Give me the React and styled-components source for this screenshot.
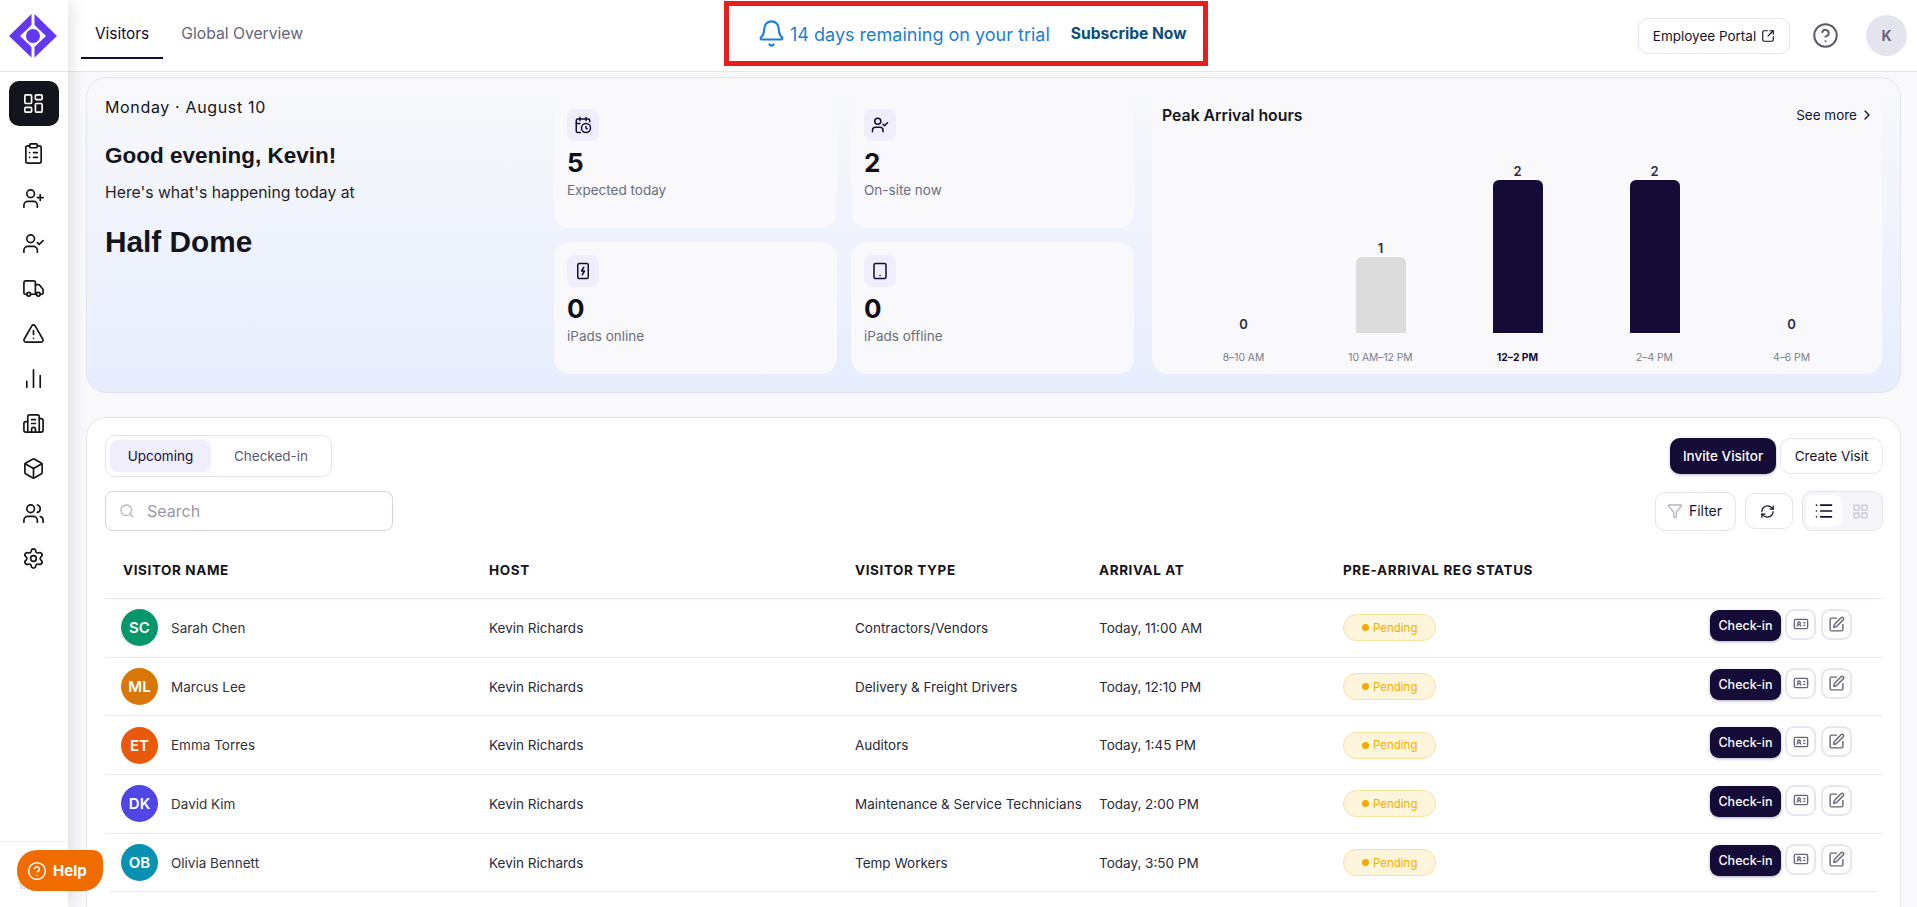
import styled, { createGlobalStyle } from "styled-components";
import {
  LayoutDashboard,
  ClipboardList,
  UserPlus,
  UserCheck,
  Truck,
  TriangleAlert,
  ChartNoAxesColumn,
  Building2,
  Box,
  Users,
  Settings,
  Bell,
  CircleHelp,
  SquareArrowOutUpRight,
  CalendarClock,
  Tablet,
  ChevronRight,
  Search,
  Filter,
  RefreshCw,
  List,
  LayoutGrid,
  IdCard,
  SquarePen,
} from "lucide-react";

const GlobalStyle = createGlobalStyle`
  * {
    box-sizing: border-box;
  }
  html, body {
    margin: 0;
    height: 100%;
    overflow: hidden;
    background: #f9f9fb;
    font-family: Inter, "Liberation Sans", sans-serif;
    color: #14141c;
  }
`;

const Page = styled.div`
  display: flex;
  height: 100vh;
  overflow: hidden;
  position: relative;
`;

const Sidebar = styled.aside`
  width: 68px;
  flex-shrink: 0;
  background: #fff;
  display: flex;
  flex-direction: column;
  box-shadow: 0 0 18px rgba(20, 20, 40, 0.16);
  z-index: 2;
`;

const LogoBox = styled.div`
  height: 72px;
  flex-shrink: 0;
  border-bottom: 1px solid #e4e4ef;
  display: flex;
  align-items: center;
  justify-content: center;
  padding-right: 2px;
`;

const SideNav = styled.nav`
  display: flex;
  flex-direction: column;
  padding: 9px 9px 0;
`;

const SideItem = styled.div`
  height: 45px;
  width: 50px;
  padding-right: 2px;
  border-radius: 10px;
  display: flex;
  align-items: center;
  justify-content: center;
  background: ${(p) => (p.$active ? "#14141c" : "transparent")};
  color: ${(p) => (p.$active ? "#fff" : "#14141c")};
  margin-bottom: ${(p) => (p.$active ? "5px" : "0")};
`;

const SideFooter = styled.div`
  margin-top: auto;
  height: 66px;
  border-top: 1px solid #f0f0f5;
  padding: 36px 0 0 18px;
  font-size: 11px;
  color: #c4c4d0;
`;

const HelpButton = styled.button`
  position: absolute;
  left: 17px;
  top: 850px;
  width: 86px;
  height: 41px;
  border: none;
  border-radius: 20px 10px 20px 20px;
  background: #ee6c00;
  color: #fff;
  font-family: inherit;
  font-size: 15px;
  font-weight: 700;
  display: flex;
  align-items: center;
  gap: 6px;
  padding: 0 0 0 10px;
  z-index: 3;
`;

const Main = styled.main`
  flex: 1;
  min-width: 0;
  display: flex;
  flex-direction: column;
`;

const Header = styled.header`
  height: 72px;
  flex-shrink: 0;
  background: #fff;
  border-bottom: 1px solid #e4e4ef;
  display: flex;
  align-items: center;
  padding: 0 10px 0 13px;
`;

const TopTabs = styled.div`
  width: 222px;
  display: flex;
  align-self: stretch;
  gap: 18px;
`;

const TopTab = styled.div`
  height: 59px;
  padding: 10px ${(p) => (p.$active ? "14px" : "0")} 0;
  display: flex;
  align-items: center;
  font-size: ${(p) => (p.$active ? "15.4px" : "15.7px")};
  white-space: nowrap;
  color: ${(p) => (p.$active ? "#140b36" : "#64647c")};
  border-bottom: 2px solid ${(p) => (p.$active ? "#140b36" : "transparent")};
`;

const TrialBanner = styled.div`
  width: 484px;
  height: 65px;
  margin: 1px 0 6px 421px;
  border: 5px solid #e81e1e;
  display: flex;
  align-items: center;
  padding-left: 28px;
`;

const TrialText = styled.span`
  margin: 3px 0 0 4px;
  font-size: 18px;
  color: #1a7fd4;
`;

const SubscribeLink = styled.span`
  margin: 1px 0 0 21px;
  font-size: 15.6px;
  font-weight: 700;
  color: #0a4d80;
`;

const HeaderRight = styled.div`
  margin-left: auto;
  display: flex;
  align-items: center;
`;

const PortalButton = styled.button`
  width: 152px;
  height: 36px;
  border: 1px solid #e4e4ef;
  border-radius: 10px;
  background: #fff;
  font-family: inherit;
  font-size: 13.5px;
  color: #14142c;
  display: flex;
  align-items: center;
  justify-content: center;
  gap: 5px;
`;

const HelpIcon = styled.div`
  margin: 0 27px 0 22px;
  display: flex;
  color: #5c5c6e;
`;

const UserBadge = styled.div`
  width: 41px;
  height: 41px;
  border-radius: 50%;
  background: #e4e4ef;
  color: #66667a;
  font-size: 14px;
  font-weight: 700;
  display: flex;
  align-items: center;
  justify-content: center;
`;

const Content = styled.div`
  flex: 1;
  min-height: 0;
  padding: 5px 16px 0 18px;
  display: flex;
  flex-direction: column;
  gap: 24px;
`;

const Hero = styled.section`
  height: 316px;
  flex-shrink: 0;
  border: 1px solid #e4e4ef;
  border-radius: 20px;
  background: linear-gradient(180deg, #f9f9fb 0%, #e6edfd 100%);
  padding: 18px;
  display: grid;
  grid-template-columns: 1fr 580px 730px;
  gap: 18px;
`;

const Welcome = styled.div`
  display: flex;
  flex-direction: column;
`;

const DateLine = styled.div`
  margin-top: 1px;
  font-size: 16px;
  letter-spacing: 0.65px;
  line-height: 20px;
`;

const Greeting = styled.h1`
  margin: 23px 0 0;
  font-family: "Liberation Sans", sans-serif;
  font-size: 22.5px;
  line-height: 32px;
  font-weight: 700;
`;

const Happening = styled.div`
  margin-top: 11px;
  font-size: 15.75px;
  line-height: 20px;
  color: #1e1e2c;
`;

const SiteName = styled.div`
  margin-top: 21px;
  font-family: "Liberation Sans", sans-serif;
  font-size: 29.8px;
  line-height: 36px;
  font-weight: 700;
`;

const StatGrid = styled.div`
  display: grid;
  grid-template-columns: 283px 283px;
  grid-template-rows: 132px 132px;
  gap: 14px;
`;

const StatCard = styled.div`
  background: #f9f9fb;
  border-radius: 16px;
  padding: 13px;
`;

const StatIcon = styled.div`
  width: 32px;
  height: 32px;
  border-radius: 8px;
  background: #f0edfd;
  color: #140b36;
  display: flex;
  align-items: center;
  justify-content: center;
`;

const StatValue = styled.div`
  margin-top: 7px;
  font-size: 26px;
  line-height: 30px;
  font-weight: 700;
  color: #101018;
`;

const StatLabel = styled.div`
  margin-top: 2px;
  font-size: 13.5px;
  line-height: 20px;
  color: #6c6c80;
`;

const ChartCard = styled.div`
  background: #f9f9fb;
  border-radius: 16px;
  padding: 9px 7px 0 10px;
  display: flex;
  flex-direction: column;
`;

const ChartHead = styled.div`
  display: flex;
  align-items: center;
  justify-content: space-between;
  height: 20px;
`;

const ChartTitle = styled.div`
  font-size: 15.8px;
  font-weight: 600;
`;

const SeeMore = styled.div`
  display: flex;
  align-items: center;
  gap: 2px;
  font-size: 13.5px;
  color: #14142c;
`;

const ChartColumns = styled.div`
  flex: 1;
  display: flex;
  align-items: flex-end;
  padding: 0 15px 9px 13px;
`;

const ChartColumn = styled.div`
  flex: 1;
  display: flex;
  flex-direction: column;
  align-items: center;
`;

const BarValue = styled.div`
  font-size: 13px;
  font-weight: 600;
  line-height: 16px;
  margin-bottom: 1px;
  color: #2c2c44;
`;

const Bar = styled.div`
  width: 50px;
  height: ${(p) => p.$height}px;
  border-radius: 6px 6px 0 0;
  background: ${(p) => (p.$dark ? "#140b36" : "#dcdcdc")};
`;

const BarLabel = styled.div`
  margin-top: 16px;
  font-size: 10.3px;
  line-height: 16px;
  font-weight: ${(p) => (p.$bold ? 700 : 400)};
  color: ${(p) => (p.$bold ? "#140b36" : "#7c7c8c")};
`;

const VisitorsCard = styled.section`
  flex: 1;
  min-height: 540px;
  border: 1px solid #e4e4ef;
  border-radius: 20px;
  background: #fff;
  padding: 17px 17px 0 18px;
`;

const ToolRow = styled.div`
  display: flex;
  align-items: center;
  justify-content: space-between;
  margin-bottom: 14px;
`;

const ToolGroup = styled.div`
  display: flex;
  align-items: center;
  gap: ${(p) => p.$gap || 0}px;
`;

const SegTabs = styled.div`
  width: 227px;
  height: 42px;
  border: 1px solid #e4e4ef;
  border-radius: 10px;
  padding: 4px;
  display: flex;
`;

const SegTab = styled.div`
  width: ${(p) => (p.$active ? "101px" : "auto")};
  flex: ${(p) => (p.$active ? "none" : 1)};
  padding-left: ${(p) => (p.$active ? "0" : "4px")};
  border-radius: 8px;
  background: ${(p) => (p.$active ? "#f0edfd" : "transparent")};
  color: ${(p) => (p.$active ? "#140b36" : "#5c5c74")};
  font-size: 13.5px;
  display: flex;
  align-items: center;
  justify-content: center;
`;

const PrimaryButton = styled.button`
  width: 106px;
  height: 36px;
  border: none;
  border-radius: 10px;
  background: #140b36;
  color: #fff;
  font-family: inherit;
  font-size: 13.5px;
  font-weight: 500;
  box-shadow: 0 1px 3px rgba(20, 11, 54, 0.3);
`;

const OutlineButton = styled.button`
  width: 103px;
  height: 36px;
  border: 1px solid #e4e4ef;
  border-radius: 10px;
  background: #fff;
  color: #14142c;
  font-family: inherit;
  font-size: 13.5px;
`;

const SearchBox = styled.div`
  width: 288px;
  height: 40px;
  border: 1px solid #d2d2e2;
  border-radius: 8px;
  display: flex;
  align-items: center;
  gap: 12px;
  padding-left: 13px;
  color: #9898a8;
  font-size: 16px;
`;

const FilterButton = styled.button`
  width: 81px;
  height: 39px;
  border: 1px solid #e4e4ef;
  border-radius: 10px;
  background: #fff;
  color: #14142c;
  font-family: inherit;
  font-size: 14px;
  display: flex;
  align-items: center;
  justify-content: center;
  gap: 6px;
  padding: 0 2px 1px 0;
`;

const RefreshButton = styled.button`
  width: 48px;
  height: 36px;
  border: 1px solid #e4e4ef;
  border-radius: 10px;
  background: #fff;
  color: #14142c;
  display: flex;
  align-items: center;
  justify-content: center;
  padding: 0 4px 0 0;
`;

const ViewToggle = styled.div`
  width: 81px;
  height: 40px;
  border: 1px solid #e4e4ef;
  border-radius: 10px;
  background: #f6f6fa;
  padding: 3px;
  display: flex;
`;

const ViewOption = styled.div`
  width: 36px;
  margin-right: 1px;
  flex: ${(p) => (p.$active ? "none" : 1)};
  border-radius: 8px;
  background: ${(p) => (p.$active ? "#fff" : "transparent")};
  color: ${(p) => (p.$active ? "#140b36" : "#c8c8d6")};
  display: flex;
  align-items: center;
  justify-content: center;
`;

const columns = "366px 366px 244px 244px 1fr auto";

const TableHead = styled.div`
  display: grid;
  grid-template-columns: ${columns};
  align-items: center;
  height: 68px;
  margin-top: -14px;
  padding-top: 11px;
  border-bottom: 1px solid #e4e4ef;
`;

const HeadCell = styled.div`
  padding-left: 18px;
  font-size: 13.5px;
  font-weight: 700;
  letter-spacing: 0.6px;
  color: #14141c;
  white-space: nowrap;
`;

const Row = styled.div`
  display: grid;
  grid-template-columns: ${columns};
  align-items: center;
  height: 58.7px;
  border-bottom: 1px solid #e8e8f1;
  padding-right: 31px;
  &:last-of-type {
    border-bottom-color: transparent;
  }
`;

const TableEnd = styled.hr`
  margin: -1px 6px 0 5px;
  height: 1px;
  border: none;
  background: #e8e8f1;
`;

const Cell = styled.div`
  padding-left: 18px;
  font-size: 13.5px;
  color: #2a2a3c;
  white-space: nowrap;
  overflow: hidden;
`;

const NameCell = styled.div`
  padding-left: 16px;
  display: flex;
  align-items: center;
  gap: 13px;
  font-size: 13.5px;
  color: #33333c;
`;

const Avatar = styled.div`
  width: 37px;
  height: 37px;
  border-radius: 50%;
  background: ${(p) => p.$color};
  color: #fff;
  font-size: 15px;
  font-weight: 600;
  display: flex;
  align-items: center;
  justify-content: center;
`;

const PendingPill = styled.span`
  width: 93px;
  height: 27px;
  border: 1px solid #fbdf9c;
  border-radius: 14px;
  background: #fef5dd;
  color: #f5b000;
  font-size: 11.5px;
  display: inline-flex;
  align-items: center;
  gap: 4px;
  padding-left: 18px;
  &::before {
    content: "";
    width: 7px;
    height: 7px;
    border-radius: 50%;
    background: #f5ab00;
  }
`;

const Actions = styled.div`
  display: flex;
  align-items: center;
  gap: 4px;
  margin-bottom: 5px;
`;

const CheckInButton = styled.button`
  width: 71px;
  height: 31px;
  border: none;
  border-radius: 9px;
  background: #140b36;
  color: #fff;
  font-family: inherit;
  font-size: 12.5px;
  font-weight: 500;
  box-shadow: 0 1px 3px rgba(20, 11, 54, 0.35);
`;

const IconButton = styled.button`
  width: 31px;
  height: 31px;
  padding: 0;
  margin-bottom: 2px;
  border: 2px solid #e6e6f0;
  border-radius: 9px;
  background: #fff;
  color: #66667a;
  display: flex;
  align-items: center;
  justify-content: center;
  & + & {
    margin-left: 1px;
  }
`;

const Logo = () => (
  <svg width="48" height="44" viewBox="0 0 48 44" fill="#6438ee">
    <path d="M22.5 0 L0 22 L22.5 43.5 L22.5 33 L11 22 L22.5 11 Z" />
    <path d="M25.5 0 L48 22 L25.5 43.5 L25.5 33 L37 22 L25.5 11 Z" />
    <circle cx="24" cy="22" r="7" />
  </svg>
);

const ChargingTablet = () => (
  <svg width="18" height="18" viewBox="0 0 24 24" fill="none" stroke="currentColor" strokeWidth="2" strokeLinecap="round" strokeLinejoin="round">
    <rect x="5" y="2" width="14" height="20" rx="2" />
    <path d="M13 7l-3 5h4l-3 5" />
  </svg>
);

const navIcons = [
  ClipboardList,
  UserPlus,
  UserCheck,
  Truck,
  TriangleAlert,
  ChartNoAxesColumn,
  Building2,
  Box,
  Users,
  Settings,
];

const stats = [
  { icon: <CalendarClock size={18} />, value: 5, label: "Expected today" },
  { icon: <UserCheck size={18} />, value: 2, label: "On-site now" },
  { icon: <ChargingTablet />, value: 0, label: "iPads online" },
  { icon: <Tablet size={18} />, value: 0, label: "iPads offline" },
];

const bars = [
  { label: "8–10 AM", value: 0, height: 0 },
  { label: "10 AM–12 PM", value: 1, height: 76 },
  { label: "12–2 PM", value: 2, height: 153, dark: true, bold: true },
  { label: "2–4 PM", value: 2, height: 153, dark: true },
  { label: "4–6 PM", value: 0, height: 0 },
];

const visitors = [
  { initials: "SC", name: "Sarah Chen", color: "#059669", type: "Contractors/Vendors", time: "Today, 11:00 AM" },
  { initials: "ML", name: "Marcus Lee", color: "#d97706", type: "Delivery & Freight Drivers", time: "Today, 12:10 PM" },
  { initials: "ET", name: "Emma Torres", color: "#ea580c", type: "Auditors", time: "Today, 1:45 PM" },
  { initials: "DK", name: "David Kim", color: "#4f46e5", type: "Maintenance & Service Technicians", time: "Today, 2:00 PM" },
  { initials: "OB", name: "Olivia Bennett", color: "#0891b2", type: "Temp Workers", time: "Today, 3:50 PM" },
];

function App() {
  return (
    <>
      <GlobalStyle />
      <Page>
        <Sidebar>
          <LogoBox>
            <Logo />
          </LogoBox>
          <SideNav>
            <SideItem $active>
              <LayoutDashboard size={23} strokeWidth={1.75} />
            </SideItem>
            {navIcons.map((Icon, i) => (
              <SideItem key={i}>
                <Icon size={23} strokeWidth={1.75} />
              </SideItem>
            ))}
          </SideNav>
          <SideFooter>1.0</SideFooter>
        </Sidebar>

        <HelpButton>
          <CircleHelp size={20} strokeWidth={1.75} />
          Help
        </HelpButton>

        <Main>
          <Header>
            <TopTabs>
              <TopTab $active>Visitors</TopTab>
              <TopTab>Global Overview</TopTab>
            </TopTabs>
            <TrialBanner>
              <Bell size={29} color="#1a7fd4" strokeWidth={1.75} />
              <TrialText>14 days remaining on your trial</TrialText>
              <SubscribeLink>Subscribe Now</SubscribeLink>
            </TrialBanner>
            <HeaderRight>
              <PortalButton>
                Employee Portal
                <SquareArrowOutUpRight size={14} />
              </PortalButton>
              <HelpIcon>
                <CircleHelp size={27} strokeWidth={1.75} />
              </HelpIcon>
              <UserBadge>K</UserBadge>
            </HeaderRight>
          </Header>

          <Content>
            <Hero>
              <Welcome>
                <DateLine>Monday · August 10</DateLine>
                <Greeting>Good evening, Kevin!</Greeting>
                <Happening>Here's what's happening today at</Happening>
                <SiteName>Half Dome</SiteName>
              </Welcome>
              <StatGrid>
                {stats.map((s) => (
                  <StatCard key={s.label}>
                    <StatIcon>{s.icon}</StatIcon>
                    <StatValue>{s.value}</StatValue>
                    <StatLabel>{s.label}</StatLabel>
                  </StatCard>
                ))}
              </StatGrid>
              <ChartCard>
                <ChartHead>
                  <ChartTitle>Peak Arrival hours</ChartTitle>
                  <SeeMore>
                    See more <ChevronRight size={16} />
                  </SeeMore>
                </ChartHead>
                <ChartColumns>
                  {bars.map((b) => (
                    <ChartColumn key={b.label}>
                      <BarValue>{b.value}</BarValue>
                      <Bar $height={b.height} $dark={b.dark} />
                      <BarLabel $bold={b.bold}>{b.label}</BarLabel>
                    </ChartColumn>
                  ))}
                </ChartColumns>
              </ChartCard>
            </Hero>

            <VisitorsCard>
              <ToolRow>
                <SegTabs>
                  <SegTab $active>Upcoming</SegTab>
                  <SegTab>Checked-in</SegTab>
                </SegTabs>
                <ToolGroup $gap={4}>
                  <PrimaryButton>Invite Visitor</PrimaryButton>
                  <OutlineButton>Create Visit</OutlineButton>
                </ToolGroup>
              </ToolRow>
              <ToolRow>
                <SearchBox>
                  <Search size={16} color="#b4b4c4" />
                  Search
                </SearchBox>
                <ToolGroup $gap={9}>
                  <FilterButton>
                    <Filter size={16} color="#b4b4c4" />
                    Filter
                  </FilterButton>
                  <RefreshButton>
                    <RefreshCw size={15} />
                  </RefreshButton>
                  <ViewToggle>
                    <ViewOption $active>
                      <List size={20} />
                    </ViewOption>
                    <ViewOption>
                      <LayoutGrid size={17} />
                    </ViewOption>
                  </ViewToggle>
                </ToolGroup>
              </ToolRow>

              <TableHead>
                <HeadCell>VISITOR NAME</HeadCell>
                <HeadCell>HOST</HeadCell>
                <HeadCell>VISITOR TYPE</HeadCell>
                <HeadCell>ARRIVAL AT</HeadCell>
                <HeadCell>PRE-ARRIVAL REG STATUS</HeadCell>
              </TableHead>
              {visitors.map((v) => (
                <Row key={v.name}>
                  <NameCell>
                    <Avatar $color={v.color}>{v.initials}</Avatar>
                    {v.name}
                  </NameCell>
                  <Cell>Kevin Richards</Cell>
                  <Cell>{v.type}</Cell>
                  <Cell>{v.time}</Cell>
                  <Cell>
                    <PendingPill>Pending</PendingPill>
                  </Cell>
                  <Actions>
                    <CheckInButton>Check-in</CheckInButton>
                    <IconButton>
                      <IdCard size={16} />
                    </IconButton>
                    <IconButton>
                      <SquarePen size={17} />
                    </IconButton>
                  </Actions>
                </Row>
              ))}
              <TableEnd />
            </VisitorsCard>
          </Content>
        </Main>
      </Page>
    </>
  );
}

export default App;
